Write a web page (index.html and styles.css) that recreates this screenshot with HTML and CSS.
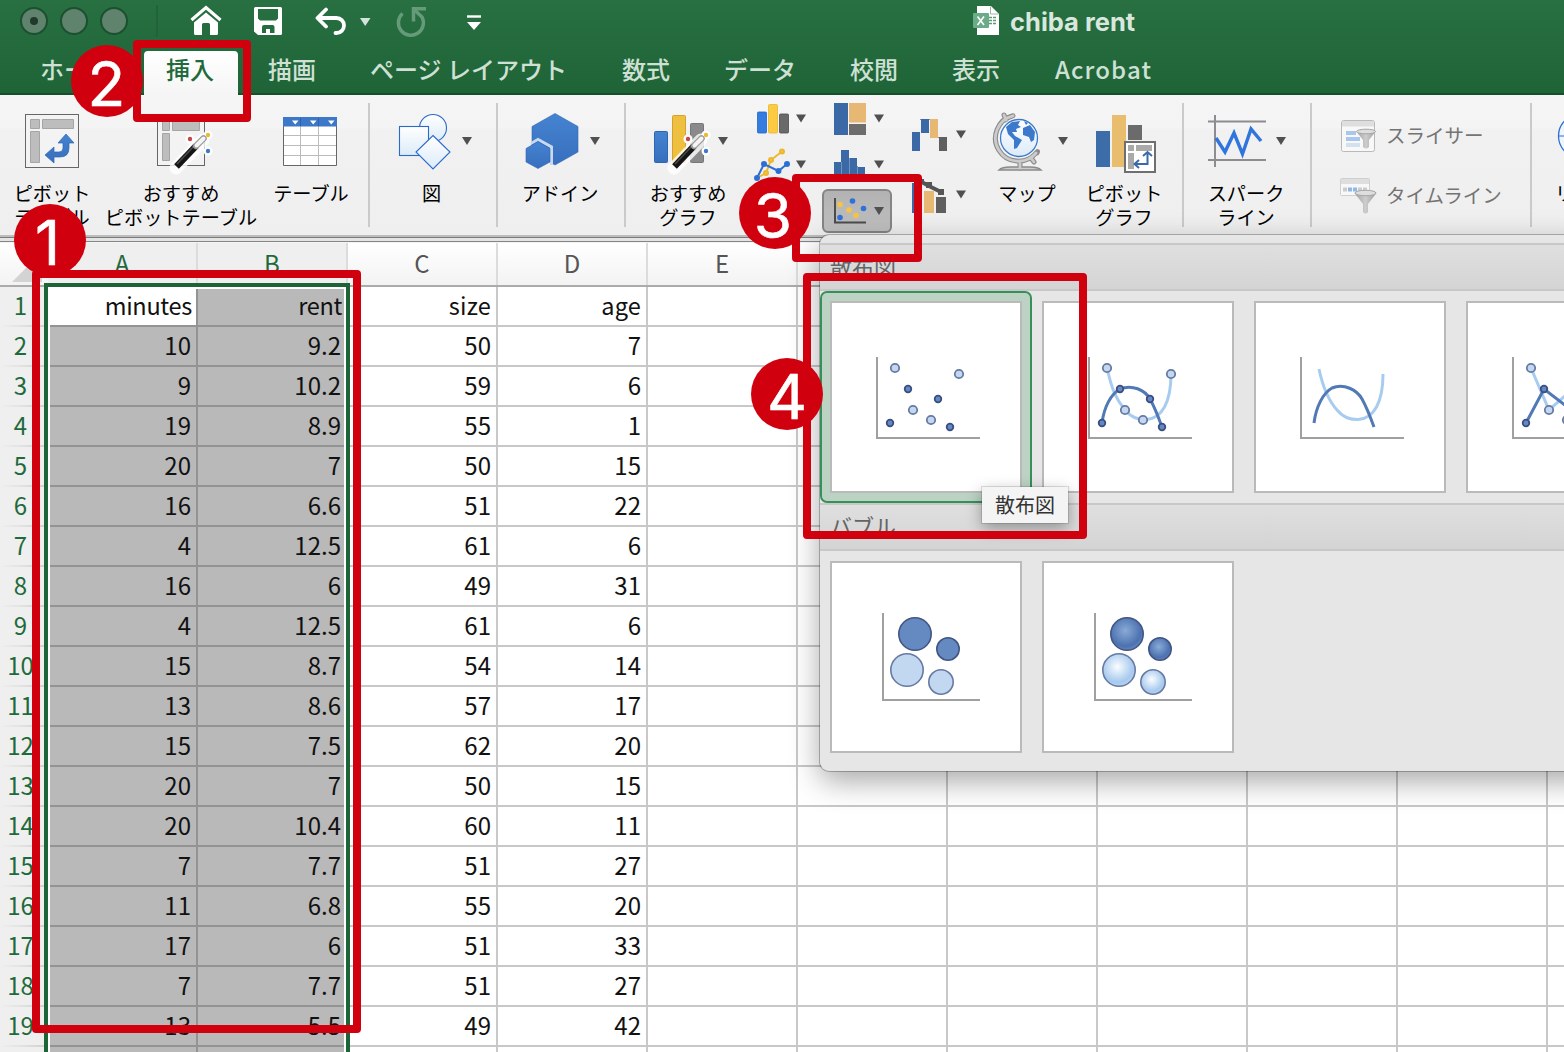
FILE: index.html
```html
<!DOCTYPE html>
<html lang="ja">
<head>
<meta charset="utf-8">
<title>chiba rent</title>
<link rel="stylesheet" href="styles.css">
</head>
<body>
<div class="window">
  <header class="header">
    <div class="titlebar">
      <svg class="ic" width="160" height="43" viewBox="0 0 160 43"><g fill="#5f836c" stroke="#1b5030" stroke-width="2"><circle cx="34" cy="21" r="13"/><circle cx="74" cy="21" r="13"/><circle cx="114" cy="21" r="13"/></g><circle cx="34" cy="21" r="4" fill="#22382a"/><path d="M157 5V37" stroke="#1f5f38" stroke-width="1.5"/></svg>
      <svg class="ic home" width="32" height="43" viewBox="190 0 32 43"><path d="M191.500 20 206 7.500 220.500 20" fill="none" stroke="#fff" stroke-width="3.200"/><path d="M194 22.500 206 12.500 218 22.500V33.500Q218 35 216.500 35H210V24.500Q210 23 208.500 23H203.500Q202 23 202 24.500V35H195.500Q194 35 194 33.500Z" fill="#fff"/></svg>
      <svg class="ic save" width="28" height="43" viewBox="254 0 28 43"><path fill-rule="evenodd" fill="#fff" d="M255.500 7H280.500Q282 7 282 8.500V33.500Q282 35 280.500 35H258L254 31.500V8.500Q254 7 255.500 7ZM258 9V18.500L260 20.500H276L278 18.500V9ZM264 25Q262 25 262 27V33H266V29H270V33H274.500V27Q274.500 25 272.500 25Z"/></svg>
      <svg class="ic undo" width="56" height="43" viewBox="315 0 56 43"><path d="M326 9.500 317.500 18 326 26.500M318 18H336.500A7.500 7.500 0 0 1 336.500 33H335.500" fill="none" stroke="#fff" stroke-width="3.800" stroke-linecap="round" stroke-linejoin="round"/><path d="M360 18H370.500L365.200 26Z" fill="#d5e4da"/></svg>
      <svg class="ic redo" width="32" height="43" viewBox="395 0 32 43"><path d="M402.500 13.500A12.500 12.500 0 1 0 422 17L414.500 10" fill="none" stroke="#659b79" stroke-width="3.500"/><path d="M426 8.800H413.500V21.500" fill="none" stroke="#659b79" stroke-width="3.500"/></svg>
      <svg class="ic more" width="16" height="43" viewBox="466 0 16 43"><path d="M467 16.500H481" stroke="#fff" stroke-width="2.400"/><path d="M467 22H481L474 30Z" fill="#fff"/></svg>
      <svg class="ic doc" width="28" height="43" viewBox="973 0 28 43"><path d="M977 6H991L999 14V35H977Z" fill="#fff"/><path d="M990.500 6.500V14H998.500" fill="none" stroke="#9ab7a4"/><rect x="973" y="13" width="16" height="15" rx="1" fill="#6bab87"/><path d="M977.500 16.500 984 25M984 16.500 977.500 25" stroke="#fff" stroke-width="1.600"/><path d="M989 17.500H992M993 17.500H996M989 20.500H992M993 20.500H996M989 23.500H992M993 23.500H996" stroke="#5f9a78" stroke-width="1.700"/></svg>
      <span class="title">chiba rent</span>
    </div>
    <nav class="tabs"><span>ホーム</span><span class="active">挿入</span><span>描画</span><span>ページ レイアウト</span><span>数式</span><span>データ</span><span>校閲</span><span>表示</span><span class="latin">Acrobat</span></nav>
  </header>

  <section class="ribbon">
    <svg width="0" height="0" class="defs"><defs>
      <linearGradient id="bl" x2="0" y2="1"><stop stop-color="#4583d0"/><stop offset="1" stop-color="#376fbd"/></linearGradient>
      <linearGradient id="sh" x2="0" y2="1"><stop stop-color="#fff"/><stop offset="1" stop-color="#dcebf8"/></linearGradient>
      <linearGradient id="fn" x2="1" y2="0"><stop stop-color="#a0a0a0"/><stop offset=".5" stop-color="#cdcdcd"/><stop offset="1" stop-color="#9c9c9c"/></linearGradient>
      <linearGradient id="pr" x2="0" y2="1"><stop stop-color="#b2b2b2"/><stop offset="1" stop-color="#c0c0c0"/></linearGradient>
      <radialGradient id="bd" cx=".45" cy=".4" r=".6"><stop stop-color="#8aabd6"/><stop offset=".8" stop-color="#4c71b0"/><stop offset="1" stop-color="#6486bd"/></radialGradient>
      <radialGradient id="bp" cx=".45" cy=".4" r=".6"><stop stop-color="#fbfdff"/><stop offset=".8" stop-color="#a6c9ee"/><stop offset="1" stop-color="#b7d4f0"/></radialGradient>
      <g id="wand"><path d="M176 168 203 140" stroke="#fff" stroke-opacity=".8" stroke-width="13" stroke-linecap="round"/><circle cx="190" cy="139" r="4.500" fill="#fff"/><circle cx="208" cy="135" r="4.500" fill="#fff"/><circle cx="208" cy="151" r="4.500" fill="#fff"/><path d="M176.500 166.500 196 146" stroke="#151515" stroke-width="6.500"/><path d="M177 164 195 145" stroke="#4a4a4a" stroke-width="1.500"/><path d="M196 146 203.500 138.500" stroke="#999" stroke-width="6.500" stroke-linecap="round"/><path d="M196.500 145.500 203.500 138.500" stroke="#f4f4f4" stroke-width="4" stroke-linecap="round"/><circle cx="190" cy="139" r="2.200" fill="#c94545"/><circle cx="208" cy="135" r="2.200" fill="#efb935"/><circle cx="208" cy="151" r="2.200" fill="#3c78cc"/></g>
      <path id="ar" d="M-5-4H5L0 4Z" fill="#505050"/>
    </defs></svg>

    <div class="tile w104"><svg width="104" height="76" viewBox="0 103 104 76"><rect x="25.500" y="114.500" width="53" height="53" fill="#f3f3f3" stroke="#666"/><g fill="#bdbdbd" stroke="#a5a5a5"><path d="M30.500 119.500H39.500V128.500H30.500ZM42.500 119.500H73.500V128.500H42.500ZM30.500 131.500H39.500V162.500H30.500Z"/></g><path d="M66 134 74 143H69V148Q69 157 60 157H54V163L45 155 54 147V152H59Q63 152 63 148V143H58Z" fill="url(#bl)" stroke="#2f66b4" stroke-width=".7"/></svg><p>ピボット<br>テーブル</p></div>
    <div class="tile w156"><svg width="156" height="76" viewBox="104 103 156 76"><rect x="157.500" y="114.500" width="47" height="51" fill="#f3f3f3" stroke="#666"/><path d="M162.500 119.500H169.500V130.500H162.500ZM172.500 119.500H199.500V130.500H172.500ZM162.500 133.500H169.500V160.500H162.500Z" fill="#bdbdbd" stroke="#a5a5a5"/><use href="#wand"/></svg><p class="nudge1">おすすめ<br>ピボットテーブル</p></div>
    <div class="tile w102"><svg width="102" height="76" viewBox="260 103 102 76"><path d="M283.500 117.500H336.500V165.500H283.500Z" fill="#fff" stroke="#666"/><path d="M284 135.500H336M284 145.500H336M284 155.500H336M300.500 126V165M318.500 126V165" stroke="#bbb"/><path d="M283 117H337V126.500H283Z" fill="#3d77c8"/><path d="M300.500 118V126M318.500 118V126" stroke="#2d62ae"/><path d="M292 120.500H298.500L295.200 124.500ZM310 120.500H316.500L313.200 124.500ZM328 120.500H334.500L331.200 124.500Z" fill="#fff"/></svg><p>テーブル</p></div>
    <i class="sep first"></i>
    <div class="tile w126"><svg width="126" height="76" viewBox="370 103 126 76"><g fill="url(#sh)" stroke="#2b6bc8" stroke-width="1.100"><circle cx="433" cy="128" r="13.500"/><rect x="399.500" y="126.500" width="29" height="29"/><path d="M433 135.500 450 152 433 169 416 152Z"/></g><use href="#ar" x="467" y="141"/></svg><p class="nudge">図</p></div>
    <i class="sep"></i>
    <div class="tile w126"><svg width="126" height="76" viewBox="498 103 126 76"><path d="M555 113.500 578 126.500V152L555 165 532 152V126.500Z" fill="url(#bl)" stroke="#2f66b4" stroke-width=".6"/><path d="M531 143.500 538 139.500 551.500 147V165" fill="none" stroke="#c8d9ef" stroke-width="3"/><path d="M538 141.500 550 148.500V162L538 168.500 526 162V148.500Z" fill="url(#bl)" stroke="#2f66b4" stroke-width=".6"/><use href="#ar" x="595" y="141"/></svg><p class="nudge1">アドイン</p></div>
    <i class="sep"></i>
    <div class="tile w124"><svg width="124" height="76" viewBox="626 103 124 76"><rect x="654.500" y="131.500" width="13" height="31" rx="1" fill="url(#bl)" stroke="#2f66b4"/><rect x="672.500" y="115.500" width="13" height="47" rx="1" fill="#efc03f" stroke="#d3a32e"/><rect x="690.500" y="123.500" width="13" height="39" rx="1" fill="#8a8a8d" stroke="#77777a"/><use href="#wand" x="498"/><use href="#ar" x="723" y="141"/></svg><p>おすすめ<br>グラフ</p></div>
    <div class="minis">
      <svg width="62" height="140" viewBox="750 95 62 140"><g stroke-width=".8"><rect x="757.500" y="112" width="9" height="21" rx="1" fill="#357ce0" stroke="#2264c4"/><rect x="768.500" y="104.500" width="9" height="28.500" rx="1" fill="#fccb42" stroke="#e9b434"/><rect x="779.500" y="114" width="9" height="19" rx="1" fill="#6a6a6a" stroke="#4d4d4d"/></g><use href="#ar" x="801" y="118.500"/><g stroke="#edb82f" fill="#f6c343" stroke-width="2"><path d="M757 178 766 173 771 160 782 151.500" fill="none"/><circle cx="766" cy="173" r="2"/><circle cx="771" cy="160" r="2"/><circle cx="782" cy="151.500" r="2"/></g><g stroke="#2c6fd4" fill="#2c6fd4" stroke-width="2"><path d="M757 178 764 164 778.500 171 787 164" fill="none"/><circle cx="757" cy="178" r="2"/><circle cx="764" cy="164" r="2"/><circle cx="778.500" cy="171" r="2"/><circle cx="787" cy="164" r="2"/></g><use href="#ar" x="801" y="164.500"/></svg>
      <svg width="88" height="140" viewBox="812 95 88 140"><path d="M834 103H848V135H834Z" fill="#3a69a6"/><path d="M849 103H866V122.500H849Z" fill="#e6b873"/><path d="M849 124H866V135H849Z" fill="#6d6d6d"/><use href="#ar" x="879" y="118.500"/><path d="M834 162H841V150H849V158H857V167H865V180H834Z" fill="#3a69a6"/><path d="M841.500 162V180M849.500 158V180M857.500 166V180" stroke="#6f94c2"/><use href="#ar" x="879" y="164.500"/><rect x="823" y="190" width="68" height="42" rx="5" fill="url(#pr)" stroke="#858585" stroke-width="2"/><path d="M835 198V222.500H866" fill="none" stroke="#4c4c4c" stroke-width="2"/><g fill="#2f70db"><circle cx="852.500" cy="201" r="2.800"/><circle cx="863.500" cy="208.500" r="2.800"/><circle cx="840" cy="217.500" r="2.800"/></g><g fill="#f6c445"><circle cx="840" cy="204.500" r="2.800"/><circle cx="849" cy="210" r="2.800"/><circle cx="856" cy="215.500" r="2.800"/></g><use href="#ar" x="879" y="211"/></svg>
      <svg width="78" height="140" viewBox="900 95 78 140"><path d="M920 132.500H912M920 119.500H930M930 137.500H939" stroke="#777" stroke-width=".8"/><path d="M912 132H920V151H912ZM921 119H929V133H921Z" fill="#3a69a6"/><path d="M930 119H938V138H930Z" fill="#e6b873"/><path d="M939 137H947V151H939Z" fill="#5f5f5f"/><use href="#ar" x="961" y="134.500"/><path d="M912 183H922V213H912Z" fill="#3a69a6"/><path d="M924 191H934V213H924Z" fill="#e6b873"/><path d="M936 197H946V213H936Z" fill="#5f5f5f"/><path d="M918 180 929 186 942 192.500" fill="none" stroke="#555" stroke-width="4"/><path d="M918 179H924V184H918ZM926 182H932V188H926ZM938 189H944V195H938Z" fill="#555"/><use href="#ar" x="961" y="194.500"/></svg>
    </div>
    <div class="tile w98"><svg width="98" height="76" viewBox="978 103 98 76"><g fill="none" stroke-linecap="round"><path d="M1013 115.800A23 23 0 1 0 1036 153M1004 115 1006 120M1031 158 1034 162M1020 163V168M1037 153 1037.500 151.500" stroke="#8b8b8b" stroke-width="5"/><path d="M999 170Q1002 167 1010 167H1030Q1038 167 1041 170Z" fill="#ccc" stroke="#8b8b8b" stroke-width="1.500"/><path d="M1013 115.800A23 23 0 1 0 1036 153M1004 115 1006 120M1031 158 1034 162M1020 163V168" stroke="#cbcbcb" stroke-width="2.800"/></g><circle cx="1019" cy="138" r="20" fill="#f6f6f6"/><circle cx="1019" cy="138" r="18.500" fill="url(#sh)" stroke="#3d7acb" stroke-width="1.300"/><path d="M1006 127 1012 122 1020 121 1018 125 1021 127 1016 129 1017 132 1012 132 1015 136 1022 140 1017 148 1014 149 1014 140 1008 134ZM1023 128 1030 125 1035 132 1034 140 1031 142 1029 137 1023 135ZM1024 121 1028 123 1026 125Z" fill="#3d79ca"/><use href="#ar" x="1063" y="141"/></svg><p>マップ</p></div>
    <div class="tile w96"><svg width="96" height="76" viewBox="1076 103 96 76"><path d="M1096 131H1110V167H1096Z" fill="#3d6da9"/><path d="M1112 115H1126V167H1112Z" fill="#e8bd6e"/><path d="M1128 125H1142V140H1128Z" fill="#6b6b6b"/><rect x="1125" y="142" width="30" height="30" fill="#fff" stroke="#6f6f6f" stroke-width="2"/><path d="M1128 145H1134V151H1128ZM1136 145H1152V151H1136ZM1128 153H1134V169H1128Z" fill="#aaa"/><path d="M1147.500 153V164H1136M1143 156 1147.500 152 1152 156M1139 160 1134.500 164 1139 168" fill="none" stroke="#3a6aa7" stroke-width="2"/></svg><p>ピボット<br>グラフ</p></div>
    <i class="sep after"></i>
    <div class="tile w126"><svg width="126" height="76" viewBox="1184 103 126 76"><path d="M1215 115V167M1208 121.500H1266M1208 160H1266" stroke="#8c8c91" stroke-width="2" fill="none"/><path d="M1216 138 1225 152 1234 133 1242.500 154 1251 129 1261 141" fill="none" stroke="#2f75dd" stroke-width="3.400"/><use href="#ar" x="1281" y="141"/></svg><p class="nudge1">スパーク<br>ライン</p></div>
    <i class="sep"></i>
    <div class="filters">
      <div><svg width="40" height="40" viewBox="1339 115 40 40"><rect x="1341.500" y="120.500" width="33" height="31" rx="2" fill="#f8f8f8" stroke="#b9b9b9"/><path d="M1342 121H1374V126.500H1342Z" fill="#dedede"/><path d="M1346 131H1356V135H1346ZM1346 137H1360V141H1346Z" fill="#a9c6ec"/><path d="M1346 143H1360V147H1346Z" fill="#d2e0f0"/><path d="M1356 131H1376L1369 140V147Q1366 150 1363 147V140Z" fill="url(#fn)"/><ellipse cx="1366" cy="131.500" rx="9.500" ry="2.300" fill="#dedede" stroke="#a5a5a5"/></svg><span>スライサー</span></div>
      <div><svg width="40" height="40" viewBox="1339 175 40 40"><rect x="1340.500" y="178.500" width="29" height="17" rx="1" fill="#f8f8f8" stroke="#d0d0d0"/><path d="M1341 179H1369V184H1341Z" fill="#dedede"/><path d="M1343 187.500H1347V191.500H1343ZM1358 187.500H1362V191.500H1358ZM1363 187.500H1367V191.500H1363Z" fill="#ccc"/><path d="M1348 187.500H1352V191.500H1348ZM1353 187.500H1357V191.500H1353Z" fill="#91b7e8"/><path d="M1354.500 193H1376.500L1368 204V212Q1365.500 215 1363 212V204Z" fill="url(#fn)"/><ellipse cx="1365.500" cy="193" rx="10.500" ry="2.700" fill="#dedede" stroke="#a5a5a5"/></svg><span>タイムライン</span></div>
    </div>
    <i class="sep"></i>
    <div class="tile last"><svg width="32" height="76" viewBox="1532 103 32 76"><circle cx="1580.500" cy="136" r="22" fill="#eef5fd" stroke="#2b6fd6" stroke-width="1.300"/><path d="M1559 136H1564" stroke="#2b6fd6"/></svg><p>リンク</p></div>
  </section>
  <div class="rule"></div>

  <main class="sheet">
    <div class="row head"><b><svg width="30" height="30" viewBox="0 0 30 30"><path d="M30 0V30H0Z" fill="#d3d3d3"/></svg></b><span class="on">A</span><span class="on">B</span><span>C</span><span>D</span><span>E</span></div>
    <div class="row names"><b>1</b><span class="cur">minutes</span><span>rent</span><span>size</span><span>age</span></div>
    <div class="row"><b>2</b><span>10</span><span>9.2</span><span>50</span><span>7</span></div>
    <div class="row"><b>3</b><span>9</span><span>10.2</span><span>59</span><span>6</span></div>
    <div class="row"><b>4</b><span>19</span><span>8.9</span><span>55</span><span>1</span></div>
    <div class="row"><b>5</b><span>20</span><span>7</span><span>50</span><span>15</span></div>
    <div class="row"><b>6</b><span>16</span><span>6.6</span><span>51</span><span>22</span></div>
    <div class="row"><b>7</b><span>4</span><span>12.5</span><span>61</span><span>6</span></div>
    <div class="row"><b>8</b><span>16</span><span>6</span><span>49</span><span>31</span></div>
    <div class="row"><b>9</b><span>4</span><span>12.5</span><span>61</span><span>6</span></div>
    <div class="row"><b>10</b><span>15</span><span>8.7</span><span>54</span><span>14</span></div>
    <div class="row"><b>11</b><span>13</span><span>8.6</span><span>57</span><span>17</span></div>
    <div class="row"><b>12</b><span>15</span><span>7.5</span><span>62</span><span>20</span></div>
    <div class="row"><b>13</b><span>20</span><span>7</span><span>50</span><span>15</span></div>
    <div class="row"><b>14</b><span>20</span><span>10.4</span><span>60</span><span>11</span></div>
    <div class="row"><b>15</b><span>7</span><span>7.7</span><span>51</span><span>27</span></div>
    <div class="row"><b>16</b><span>11</span><span>6.8</span><span>55</span><span>20</span></div>
    <div class="row"><b>17</b><span>17</span><span>6</span><span>51</span><span>33</span></div>
    <div class="row"><b>18</b><span>7</span><span>7.7</span><span>51</span><span>27</span></div>
    <div class="row"><b>19</b><span>13</span><span>5.5</span><span>49</span><span>42</span></div>
    <div class="row"><b></b><span></span><span></span><span></span><span></span></div>
    <div class="selection"></div>
  </main>

  <aside class="menu">
    <h2>散布図</h2>
    <div class="gallery">
      <div class="card chosen"><svg width="188" height="188" viewBox="832 303 188 188"><path d="M877 357V438H980" fill="none" stroke="#a0a0a0" stroke-width="2"/><g fill="#c1d8f0" stroke="#6779a3" stroke-width="1.800"><circle cx="895" cy="368" r="4.200"/><circle cx="959" cy="374" r="4.200"/><circle cx="913" cy="410" r="4.200"/><circle cx="931" cy="420" r="4.200"/></g><g fill="#6488c1" stroke="#3b4f83" stroke-width="1.800"><circle cx="908" cy="389" r="3.300"/><circle cx="938" cy="399" r="3.300"/><circle cx="890" cy="423" r="3.300"/><circle cx="950" cy="427" r="3.300"/></g></svg></div>
      <div class="card"><svg width="188" height="188" viewBox="832 303 188 188"><path d="M877 357V438H980" fill="none" stroke="#a0a0a0" stroke-width="2"/><path d="M895 368C900 390 904 399 913 410C920 418 926 419.500 934 419.500C950 419 959 402 959 374" fill="none" stroke="#a8ccef" stroke-width="3"/><path d="M890 423C892 407 899 394 908 389C920 384 933 390 938 399C942 406 946 416 950 427" fill="none" stroke="#5179b6" stroke-width="3"/><g fill="#c1d8f0" stroke="#6779a3" stroke-width="1.800"><circle cx="895" cy="368" r="4.200"/><circle cx="959" cy="374" r="4.200"/><circle cx="913" cy="410" r="4.200"/><circle cx="931" cy="420" r="4.200"/></g><g fill="#6488c1" stroke="#3b4f83" stroke-width="1.800"><circle cx="908" cy="389" r="3.300"/><circle cx="938" cy="399" r="3.300"/><circle cx="890" cy="423" r="3.300"/><circle cx="950" cy="427" r="3.300"/></g></svg></div>
      <div class="card"><svg width="188" height="188" viewBox="832 303 188 188"><path d="M877 357V438H980" fill="none" stroke="#a0a0a0" stroke-width="2"/><path d="M895 369C899 388 904 400 913 410C920 418 926 419.500 934 419.500C950 419 959 402 959 374" fill="none" stroke="#a8ccef" stroke-width="3"/><path d="M890 423C892 407 899 393 908 388C920 383 933 390 938 399C942 406 946 416 950 427" fill="none" stroke="#5179b6" stroke-width="3"/></svg></div>
      <div class="card"><svg width="188" height="188" viewBox="832 303 188 188"><path d="M877 357V438H980" fill="none" stroke="#a0a0a0" stroke-width="2"/><path d="M895 368 913 410 938 388" fill="none" stroke="#a8ccef" stroke-width="3"/><path d="M890 423 908 389 938 412" fill="none" stroke="#5179b6" stroke-width="3"/><g fill="#c1d8f0" stroke="#6779a3" stroke-width="1.800"><circle cx="895" cy="368" r="4.200"/><circle cx="913" cy="410" r="4.200"/><circle cx="931" cy="420" r="4.200"/></g><g fill="#6488c1" stroke="#3b4f83" stroke-width="1.800"><circle cx="908" cy="389" r="3.300"/><circle cx="890" cy="423" r="3.300"/></g></svg></div>
    </div>
    <h2 class="second">バブル</h2>
    <div class="gallery">
      <div class="card"><svg width="188" height="188" viewBox="832 563 188 188"><path d="M883 613V700H980" fill="none" stroke="#a0a0a0" stroke-width="2"/><g fill="#6589c1" stroke="#435683" stroke-width="1.600"><circle cx="915" cy="634" r="16.200"/><circle cx="948" cy="649" r="11.200"/></g><g fill="#c1d8f0" stroke="#6779a3" stroke-width="1.600"><circle cx="907" cy="670" r="16.200"/><circle cx="941" cy="682" r="12.200"/></g></svg></div>
      <div class="card"><svg width="188" height="188" viewBox="832 563 188 188"><path d="M883 613V700H980" fill="none" stroke="#a0a0a0" stroke-width="2"/><g fill="url(#bd)" stroke="#435683" stroke-width="1.600"><circle cx="915" cy="634" r="16.200"/><circle cx="948" cy="649" r="11.200"/></g><g fill="url(#bp)" stroke="#6779a3" stroke-width="1.600"><circle cx="907" cy="670" r="16.200"/><circle cx="941" cy="682" r="12.200"/></g></svg></div>
    </div>
  </aside>
  <div class="tooltip">散布図</div>

  <div class="frame f1"></div><div class="frame f2"></div><div class="frame f3"></div><div class="frame f4"></div>
  <div class="num n1">1</div><div class="num n2">2</div><div class="num n3">3</div><div class="num n4">4</div>
</div>
</body>
</html>
```
FILE: styles.css
```css
* { box-sizing: border-box; }
body { margin: 0; background: #fff; font-family: "Noto Sans CJK JP", sans-serif; }
svg { display: block; flex: none; }
p, h2 { margin: 0; font-weight: 400; }
.window { position: relative; width: 1564px; height: 1052px; overflow: hidden; }

.header { height: 95px; background: linear-gradient(#286f42, #1e6437); border-bottom: 2px solid #174e2b; }
.titlebar { display: flex; height: 43px; }
.home { margin-left: 30px; }
.save { margin-left: 32px; }
.undo { margin-left: 33px; }
.redo { margin-left: 24px; }
.more { margin-left: 39px; }
.doc { margin-left: 491px; }
.title { margin-left: 9px; font: 700 25.500px/44px Inter, sans-serif; letter-spacing: 0; color: #d9e7de; white-space: nowrap; }
.tabs { display: grid; grid-template-columns: 104px 124px 102px 252px 102px 126px 102px 102px 1fr; height: 52px; padding-left: 40px; font-size: 24px; font-weight: 500; line-height: 52px; color: #cfe0d5; white-space: nowrap; }
.tabs .latin { padding-left: 1px; letter-spacing: 1.100px; }
.tabs .active { width: 94px; height: 44px; margin-top: 8px; padding-right: 2px; line-height: 36px; text-align: center; color: #1f6a3b; background: linear-gradient(#fff, #f5f5f5); border-radius: 4px 4px 0 0; }

.ribbon { display: flex; height: 140px; background: linear-gradient(#f5f5f5 0, #f4f4f4 33px, #f1f1f1 34px, #efefef 100%); }
.defs { position: absolute; }
.tile { flex: none; padding-top: 8px; overflow: hidden; }
.tile p { margin-top: 2px; font-size: 19.200px; line-height: 24px; text-align: center; white-space: nowrap; color: #000; }
.tile .nudge { padding-right: 3px; }
.tile .nudge1 { padding-right: 2px; }
.w104 { width: 104px; } .w156 { width: 156px; } .w102 { width: 102px; } .w126 { width: 126px; }
.w124 { width: 124px; } .w98 { width: 98px; } .w96 { width: 96px; }
.last { width: 32px; }
.tile.last p { padding-left: 23px; text-align: left; }
.sep { flex: none; width: 2px; height: 124px; margin-top: 8px; background: #cacaca; }
.sep.first { margin-left: 6px; }
.sep.after { margin-left: 10px; }
.minis { display: flex; flex: none; width: 228px; }
.filters { flex: none; width: 218px; padding: 20px 0 0 27px; font-size: 19.500px; color: #747474; }
.filters div { display: flex; align-items: center; height: 40px; gap: 7px; margin-bottom: 20px; white-space: nowrap; }
.filters span { padding-bottom: 2px; }
.rule { height: 8px; background: linear-gradient(#bdbdbd 0 2px, #7b7b7b 2px 3px, #e4e4e4 3px 6px, #858585 6px 7px, #f4f4f4 7px); }

.sheet { position: relative; height: 809px; background: repeating-linear-gradient(90deg, transparent 0 148px, #c8c8c8 148px 150px) 48px 44px / 1650px 800px no-repeat, repeating-linear-gradient(transparent 0 38px, #c8c8c8 38px 40px) 0 44px / 1564px 800px no-repeat, #fff; }
.row { display: grid; grid-template-columns: 48px repeat(4, 150px); height: 40px; font-size: 24px; line-height: 36px; color: #111; }
.row b { padding-right: 7px; font-weight: 400; text-align: center; color: #1f6a3b; background: linear-gradient(90deg, #efefef, #d0d0d0) 0 100% / 100% 2px no-repeat, #efefef; }
.row span { padding-right: 5px; text-align: right; border-right: 2px solid transparent; }
.row.names span { padding-right: 5px; font-size: 23.500px; letter-spacing: .2px; }
.row.names span:nth-child(-n+3) { padding-right: 4px; letter-spacing: -.3px; }
.row:not(.head) span:nth-child(-n+3) { background: #b9b9b9; border-right-color: #939393; border-bottom: 2px solid #939393; }
.row:not(.head) .cur:nth-child(2) { background: #fff; }
.row.head { grid-template-columns: 48px repeat(5, 150px) 1fr; height: 44px; line-height: 39px; background: linear-gradient(#fff, #f3f3f3); border-bottom: 2px solid #ababab; color: #555; }
.row.head b { padding: 9px 0 0 12px; background: none; }
.row.head span { padding: 0; text-align: center; border-right-color: #dcdcdc; }
.row.head .on { background: #efefef; color: #1f6a3b; }
.selection { position: absolute; left: 44px; top: 40px; width: 306px; height: 800px; border: 4px solid #1d6538; box-shadow: inset 0 0 0 2px #fff; }

.menu { position: absolute; left: 820px; top: 235px; width: 860px; height: 536px; padding-top: 8px; background: #e6e6e6; border-radius: 9px; box-shadow: 0 0 0 1px rgba(0,0,0,.25), 0 10px 30px rgba(0,0,0,.35); }
.menu h2 { height: 48px; padding-left: 10px; font-size: 22px; line-height: 42px; color: #646464; background: linear-gradient(#dfdfdf, #d4d4d4); border: solid #c8c8c8; border-width: 2px 0; }
.menu .second { line-height: 40px; }
.gallery { display: flex; gap: 20px; padding: 10px; height: 212px; }
.card { flex: none; width: 192px; height: 192px; background: #fff; border: 2px solid #bababa; }
.chosen { position: relative; }
.chosen::after { content: ""; position: absolute; inset: -12px; border: 2px solid #36905a; border-radius: 7px; box-shadow: inset 0 0 0 8px #bcd3c4; }
.tooltip { position: absolute; left: 982px; top: 487px; width: 86px; height: 36px; background: #f4f4f4; box-shadow: 0 0 0 1px rgba(0,0,0,.12), 0 5px 16px rgba(0,0,0,.35); font-size: 20px; line-height: 36px; text-align: center; color: #333; }

.frame { position: absolute; border: 8px solid #d0000f; border-radius: 4px; }
.f1 { left: 32px; top: 270px; width: 329px; height: 763px; }
.f2 { left: 133px; top: 40px; width: 118px; height: 82px; }
.f3 { left: 792px; top: 174px; width: 130px; height: 88px; }
.f4 { left: 803px; top: 273px; width: 284px; height: 266px; }
.num { position: absolute; width: 72px; height: 72px; border-radius: 50%; background: #d0000f; color: #fff; font: 400 62px/77px Inter, sans-serif; -webkit-text-stroke: .6px #fff; text-align: center; }
.n1 { left: 13.500px; top: 204px; padding-right: 4px; }
.n2 { left: 70.500px; top: 45px; }
.n3 { left: 739px; top: 177px; padding-right: 4px; }
.n4 { left: 751px; top: 357.500px; }
```
